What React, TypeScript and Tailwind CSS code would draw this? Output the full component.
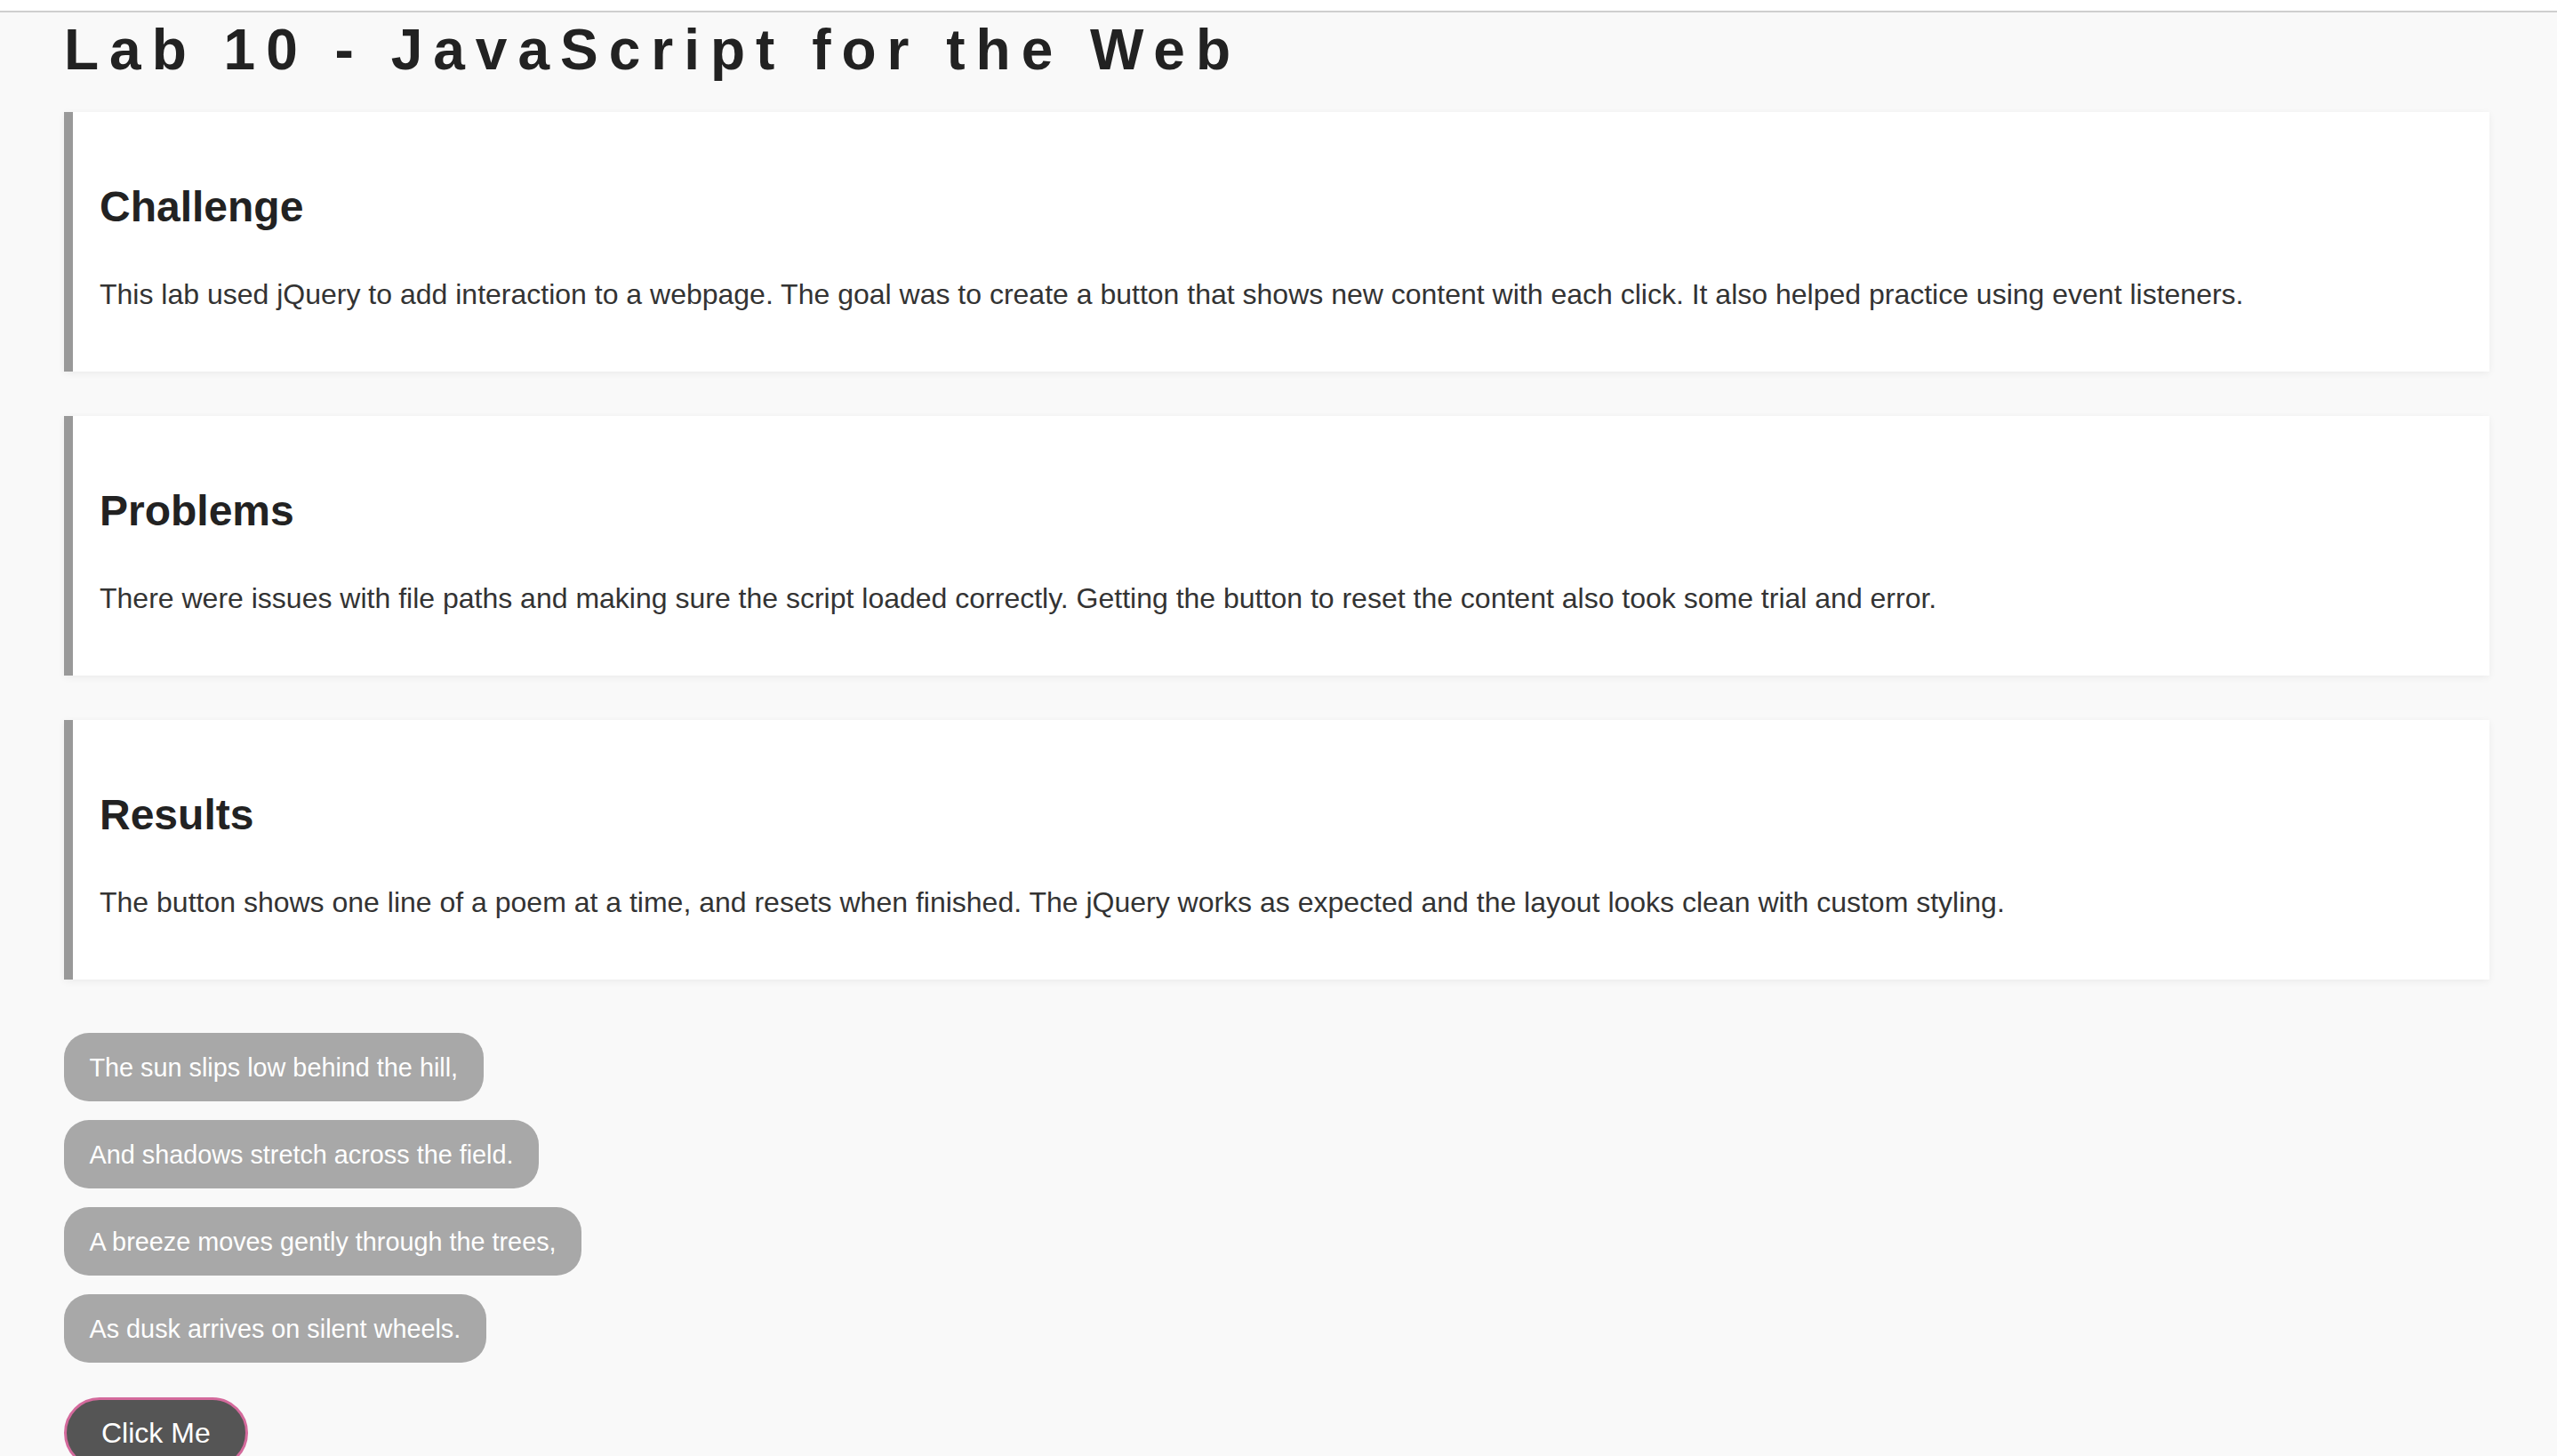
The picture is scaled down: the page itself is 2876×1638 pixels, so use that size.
import React from "react";

const cards = [
  {
    title: "Challenge",
    text: "This lab used jQuery to add interaction to a webpage. The goal was to create a button that shows new content with each click. It also helped practice using event listeners.",
  },
  {
    title: "Problems",
    text: "There were issues with file paths and making sure the script loaded correctly. Getting the button to reset the content also took some trial and error.",
  },
  {
    title: "Results",
    text: "The button shows one line of a poem at a time, and resets when finished. The jQuery works as expected and the layout looks clean with custom styling.",
  },
];

const lines = [
  "The sun slips low behind the hill,",
  "And shadows stretch across the field.",
  "A breeze moves gently through the trees,",
  "As dusk arrives on silent wheels.",
];

export default function App() {
  return (
    <div
      className="min-h-screen bg-[#f9f9f9]"
      style={{ fontFamily: '"Liberation Sans", Arial, Helvetica, sans-serif' }}
    >
      <div className="h-[14px] bg-white border-b-2 border-[#cfcfcf]" />
      <div className="pl-[72px] pr-[76px]">
        <h1 className="mt-[10px] mb-[38px] text-[64px] leading-[64px] font-bold tracking-[12px] text-[#222222] whitespace-nowrap">
          Lab 10 - JavaScript for the Web
        </h1>
        <div className="flex flex-col gap-[50px]">
          {cards.map((c) => (
            <section
              key={c.title}
              className="h-[292px] bg-white border-l-[10px] border-[#999999] pl-[30px] pt-[78px] shadow-[0_2px_8px_rgba(0,0,0,0.06)]"
            >
              <h2 className="text-[48px] leading-[58px] font-bold text-[#222222]">
                {c.title}
              </h2>
              <p className="mt-[45px] text-[32px] leading-[48px] text-[#333333]">
                {c.text}
              </p>
            </section>
          ))}
        </div>
        <div className="mt-[60px] flex flex-col items-start gap-[21px]">
          {lines.map((l) => (
            <div
              key={l}
              className="h-[77px] rounded-[28px] bg-[#a8a8a8] px-[28.5px] py-[14.5px] text-[28.8px] leading-[48px] text-white whitespace-nowrap"
            >
              {l}
            </div>
          ))}
        </div>
        <button className="mt-[39px] rounded-full border-[3px] border-[#d46a9c] bg-[#555555] px-[39px] py-[17px] text-[32px] leading-[40px] text-white">
          Click Me
        </button>
        <div className="h-[40px]" />
      </div>
    </div>
  );
}
